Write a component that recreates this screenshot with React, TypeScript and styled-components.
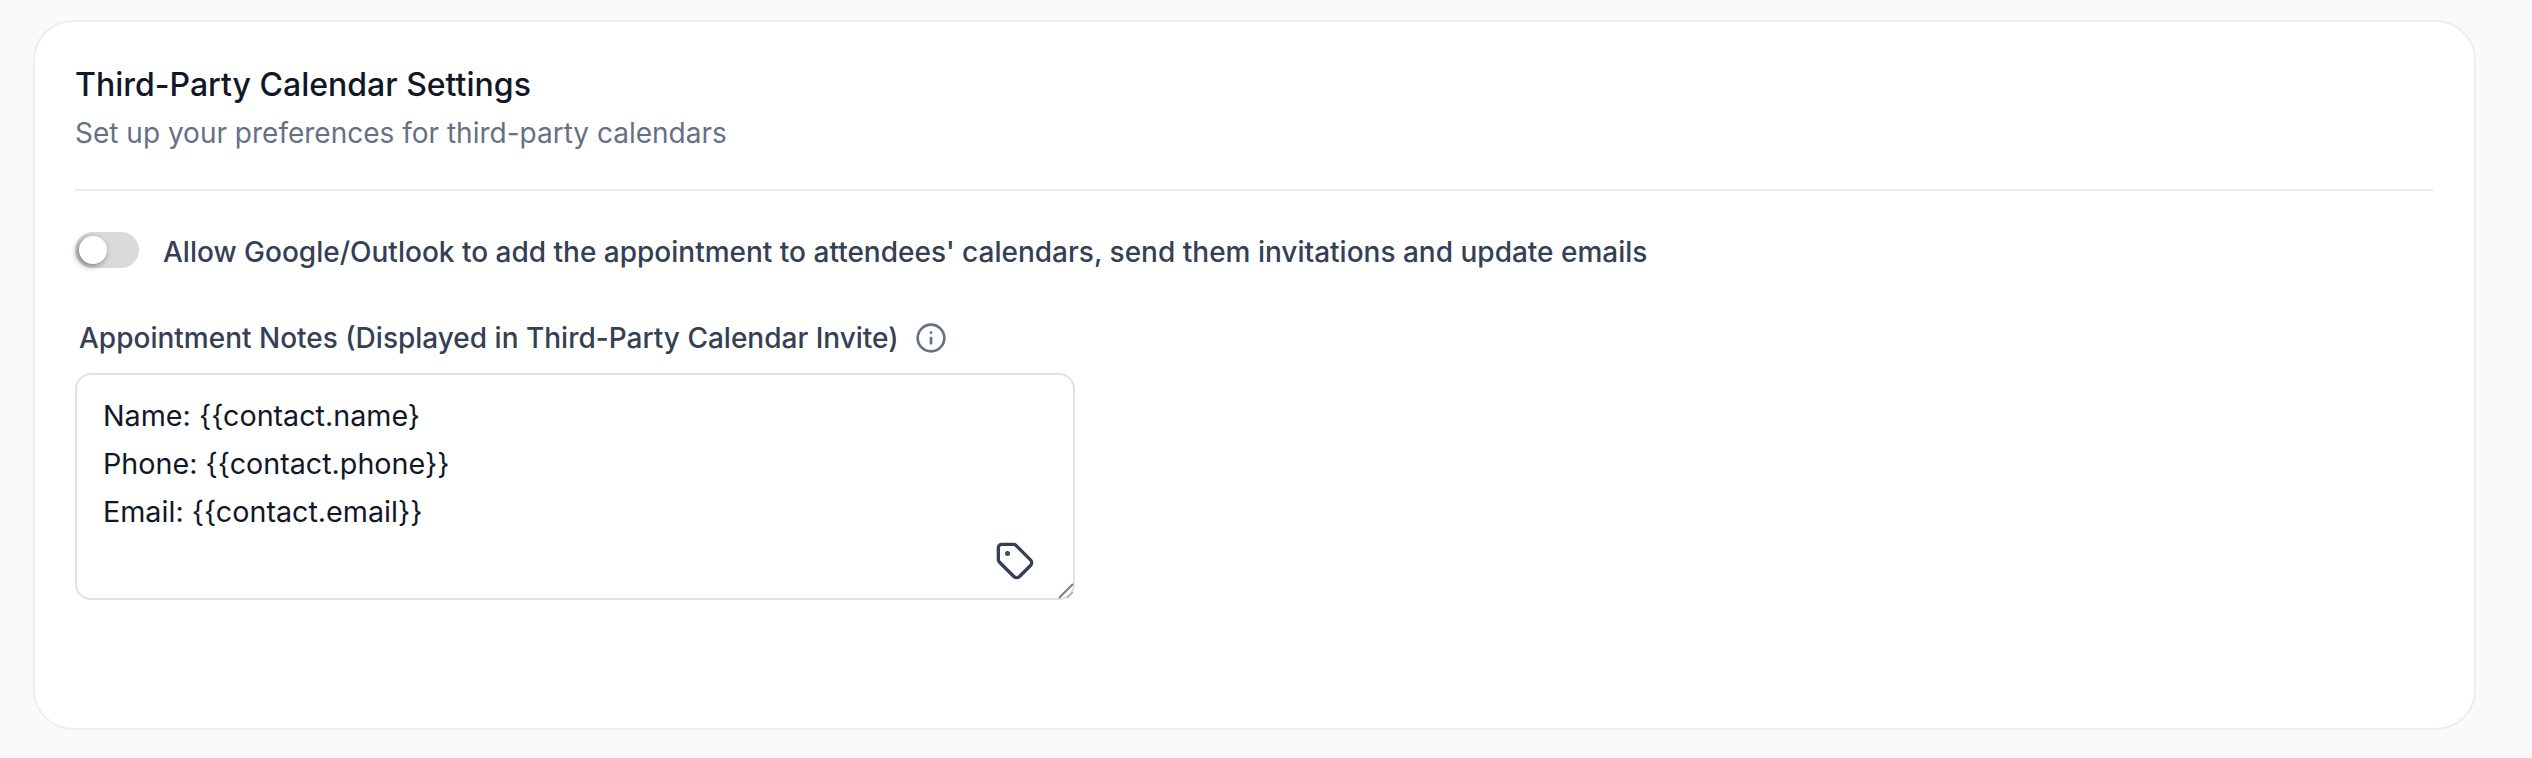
import React from 'react';
import styled, { createGlobalStyle } from 'styled-components';
import { Info, Tag } from 'lucide-react';

const GlobalStyle = createGlobalStyle`
  html, body {
    margin: 0;
    padding: 0;
    background: #f9fafb;
    font-family: Inter, 'Liberation Sans', sans-serif;
  }
`;

const Page = styled.div`
  box-sizing: border-box;
  width: 2532px;
  height: 758px;
  padding: 20px 56px 28px 33px;
  overflow: hidden;
`;

const Card = styled.section`
  box-sizing: border-box;
  height: 710px;
  padding: 43px 41px 0 40px;
  background: #fff;
  border: 2px solid #eceef1;
  border-radius: 40px;
`;

const Header = styled.header`
  padding-bottom: 36px;
  border-bottom: 2px solid #ebecf0;
`;

const Title = styled.h2`
  margin: 0;
  font-size: 32px;
  line-height: 40px;
  font-weight: 500;
  color: #101828;
`;

const Subtitle = styled.p`
  margin: 8px 0 0;
  font-size: 28px;
  line-height: 40px;
  font-weight: 400;
  color: #667085;
`;

const ToggleRow = styled.div`
  display: flex;
  align-items: center;
  gap: 24px;
  margin-top: 41px;
`;

const Toggle = styled.span`
  position: relative;
  flex: none;
  width: 64px;
  height: 36px;
  margin-bottom: 4px;
  border-radius: 18px;
  background: #dadada;
`;

const Knob = styled.span`
  position: absolute;
  top: 4px;
  left: 4px;
  width: 28px;
  height: 28px;
  border-radius: 50%;
  background: #fff;
  box-shadow: -2px 2px 6px rgba(0, 0, 0, 0.45);
`;

const ToggleLabel = styled.span`
  font-size: 28px;
  line-height: 40px;
  font-weight: 500;
  color: #344054;
`;

const NotesLabel = styled.label`
  display: flex;
  align-items: center;
  gap: 16px;
  margin: 46px 0 0 4px;
  font-size: 28px;
  line-height: 40px;
  font-weight: 500;
  color: #344054;

  svg {
    color: #667085;
  }
`;

const EditorWrap = styled.div`
  position: relative;
  width: 1000px;
  margin-top: 15px;
`;

const NotesArea = styled.textarea`
  display: block;
  box-sizing: border-box;
  width: 1000px;
  height: 227px;
  padding: 17px 26px;
  font-family: Inter, 'Liberation Sans', sans-serif;
  font-size: 28.7px;
  line-height: 48px;
  color: #101828;
  background: #fff;
  border: 2px solid #e0e2e8;
  border-radius: 16px;
  outline: none;
  resize: none;
`;

const TagButton = styled.span`
  position: absolute;
  right: 40px;
  bottom: 19px;
  display: flex;
  color: #344054;
`;

const ResizeGrip = styled.svg`
  position: absolute;
  right: 1px;
  bottom: 1px;
  width: 16px;
  height: 16px;
  pointer-events: none;
`;

const notes = 'Name: {{contact.name}\nPhone: {{contact.phone}}\nEmail: {{contact.email}}';

export default function App() {
  return (
    <>
      <GlobalStyle />
      <Page>
        <Card>
          <Header>
            <Title>Third-Party Calendar Settings</Title>
            <Subtitle>Set up your preferences for third-party calendars</Subtitle>
          </Header>
          <ToggleRow>
            <Toggle>
              <Knob />
            </Toggle>
            <ToggleLabel>
              Allow Google/Outlook to add the appointment to attendees' calendars, send them invitations and update emails
            </ToggleLabel>
          </ToggleRow>
          <NotesLabel>
            Appointment Notes (Displayed in Third-Party Calendar Invite)
            <Info size={32} />
          </NotesLabel>
          <EditorWrap>
            <NotesArea defaultValue={notes} readOnly />
            <TagButton>
              <Tag size={40} />
            </TagButton>
            <ResizeGrip viewBox="0 0 16 16">
              <path d="M1 15 15 1" stroke="#777" strokeWidth="1.8" fill="none" />
              <path d="M9 15l6-6" stroke="#aaa" strokeWidth="1.4" fill="none" />
            </ResizeGrip>
          </EditorWrap>
        </Card>
      </Page>
    </>
  );
}
